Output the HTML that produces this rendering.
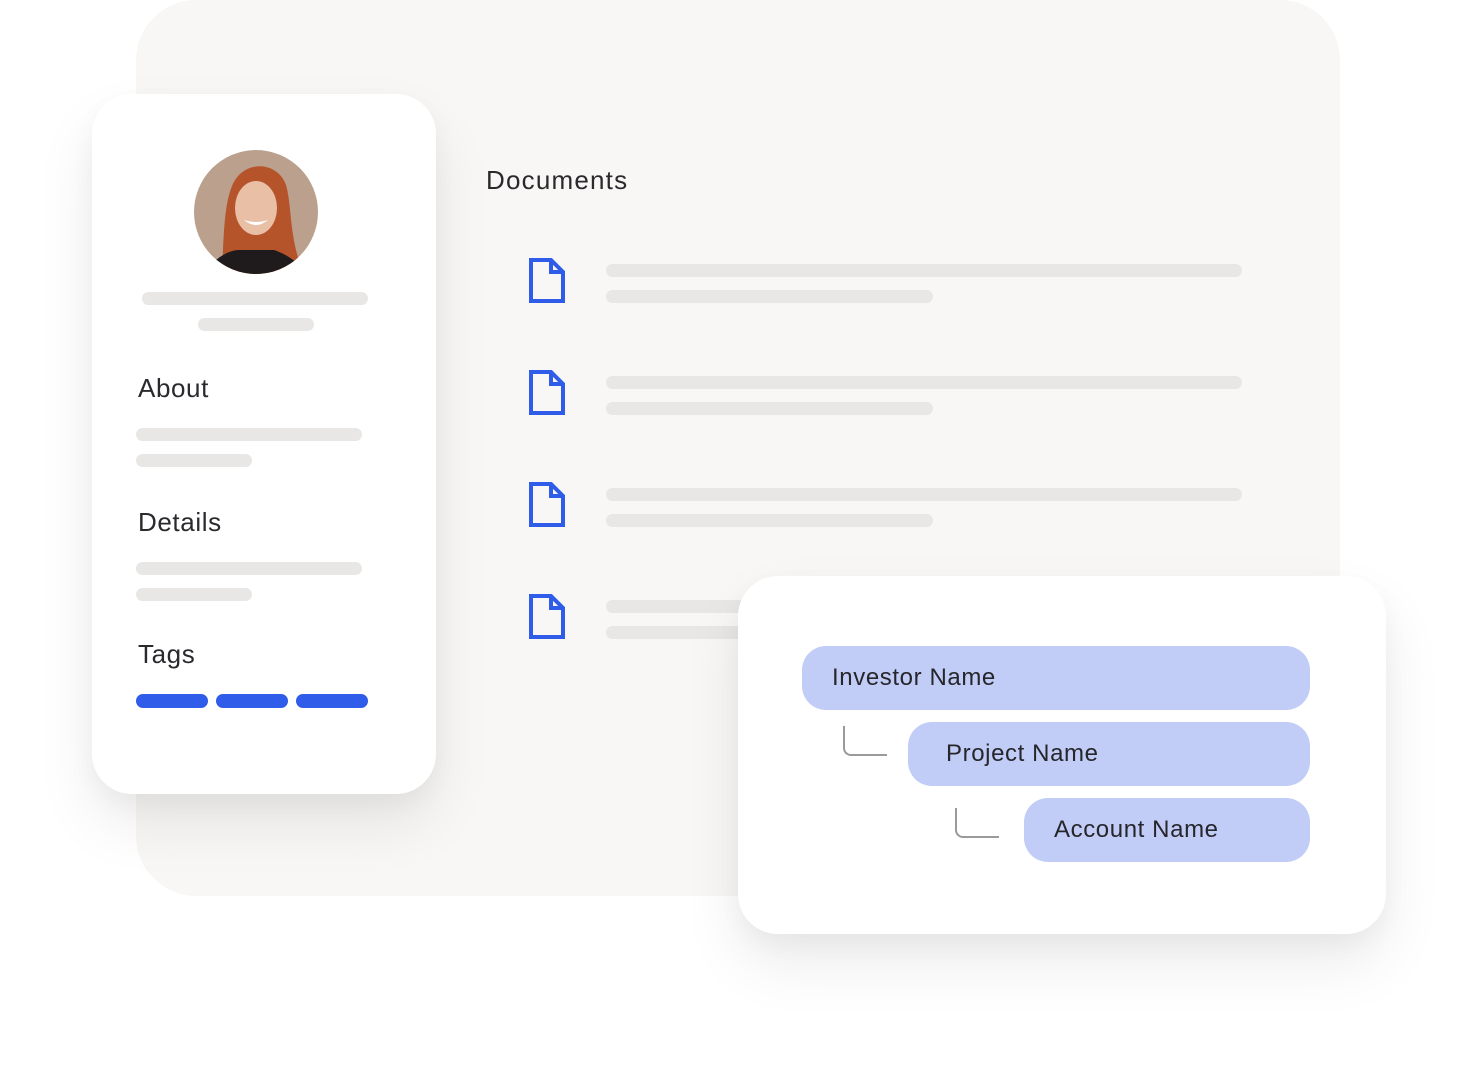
<!DOCTYPE html>
<html><head><meta charset="utf-8"><style>
*{margin:0;padding:0;box-sizing:border-box}
body{width:1477px;height:1066px;background:#fff;position:relative;overflow:hidden;font-family:"Liberation Sans",sans-serif;color:#2a2a2e}
.bg{position:absolute;left:136px;top:0;width:1204px;height:896px;background:#f8f7f5;border-radius:60px}
.card{position:absolute;background:#fff;border-radius:40px;box-shadow:0 30px 60px rgba(0,0,0,0.08),0 10px 25px rgba(0,0,0,0.04)}
.bar{position:absolute;height:13px;border-radius:7px;background:#e8e7e5}
.t{position:absolute;font-size:26px;letter-spacing:0.6px}
.tag{position:absolute;top:694px;height:14px;width:72px;border-radius:7px;background:#2f5ce8}
.pill{position:absolute;height:64px;border-radius:24px;background:#c1cdf6;font-size:24px;line-height:64px;color:#26262b;letter-spacing:0.6px}
.conn{position:absolute;width:44px;height:30px;border-left:2px solid #9a9a9a;border-bottom:2px solid #9a9a9a;border-bottom-left-radius:8px}
svg.doc{position:absolute}
</style></head><body>
<div class="bg"></div>
<div class="t" style="left:486px;top:165px;letter-spacing:1.2px">Documents</div>

<svg class="doc" style="left:527px;top:257px" width="40" height="48" viewBox="0 0 40 48"><path d="M4 3H24L36 15V44H4Z M24 3V15H36" fill="none" stroke="#2f5ce8" stroke-width="4"/></svg>
<svg class="doc" style="left:527px;top:369px" width="40" height="48" viewBox="0 0 40 48"><path d="M4 3H24L36 15V44H4Z M24 3V15H36" fill="none" stroke="#2f5ce8" stroke-width="4"/></svg>
<svg class="doc" style="left:527px;top:481px" width="40" height="48" viewBox="0 0 40 48"><path d="M4 3H24L36 15V44H4Z M24 3V15H36" fill="none" stroke="#2f5ce8" stroke-width="4"/></svg>
<svg class="doc" style="left:527px;top:593px" width="40" height="48" viewBox="0 0 40 48"><path d="M4 3H24L36 15V44H4Z M24 3V15H36" fill="none" stroke="#2f5ce8" stroke-width="4"/></svg>

<div class="bar" style="left:606px;top:264px;width:636px"></div>
<div class="bar" style="left:606px;top:290px;width:327px"></div>
<div class="bar" style="left:606px;top:376px;width:636px"></div>
<div class="bar" style="left:606px;top:402px;width:327px"></div>
<div class="bar" style="left:606px;top:488px;width:636px"></div>
<div class="bar" style="left:606px;top:514px;width:327px"></div>
<div class="bar" style="left:606px;top:600px;width:200px"></div>
<div class="bar" style="left:606px;top:626px;width:200px"></div>

<div class="card" style="left:92px;top:94px;width:344px;height:700px"></div>
<svg style="position:absolute;left:194px;top:150px" width="124" height="124" viewBox="0 0 124 124">
<defs><clipPath id="c"><circle cx="62" cy="62" r="62"/></clipPath></defs>
<g clip-path="url(#c)">
<rect width="124" height="124" fill="#bba08e"/>
<path d="M28 124 C30 80 30 40 45 25 C60 10 85 15 92 35 C98 55 95 90 110 124Z" fill="#b5542a"/>
<path d="M10 124 C20 108 35 100 45 100 L80 100 C92 104 105 112 112 124Z" fill="#1f1b1c"/>
<ellipse cx="62" cy="58" rx="21" ry="27" fill="#e9bfa6"/>
<path d="M50 70 Q62 80 74 70 Q62 74 50 70Z" fill="#fff"/>
</g></svg>
<div class="bar" style="left:142px;top:292px;width:226px"></div>
<div class="bar" style="left:198px;top:318px;width:116px"></div>
<div class="t" style="left:138px;top:373px">About</div>
<div class="bar" style="left:136px;top:428px;width:226px"></div>
<div class="bar" style="left:136px;top:454px;width:116px"></div>
<div class="t" style="left:138px;top:507px">Details</div>
<div class="bar" style="left:136px;top:562px;width:226px"></div>
<div class="bar" style="left:136px;top:588px;width:116px"></div>
<div class="t" style="left:138px;top:639px">Tags</div>
<div class="tag" style="left:136px"></div>
<div class="tag" style="left:216px"></div>
<div class="tag" style="left:296px"></div>

<div class="card" style="left:738px;top:576px;width:648px;height:358px"></div>
<div class="pill" style="left:802px;top:646px;width:508px;padding-left:30px">Investor Name</div>
<div class="conn" style="left:843px;top:726px"></div>
<div class="pill" style="left:908px;top:722px;width:402px;padding-left:38px">Project Name</div>
<div class="conn" style="left:955px;top:808px"></div>
<div class="pill" style="left:1024px;top:798px;width:286px;padding-left:30px">Account Name</div>
</body></html>
